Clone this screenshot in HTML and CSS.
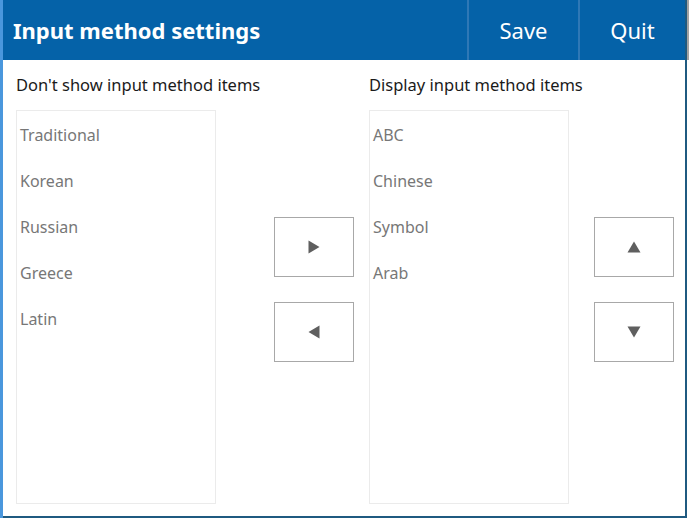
FILE: index.html
```html
<!DOCTYPE html>
<html>
<head>
<meta charset="utf-8">
<link rel="stylesheet" href="styles.css">
</head>
<body>
<div class="frame">
  <div class="edge-left"></div>
  <div class="win">
    <header class="head">
      <h1 class="title">Input method settings</h1>
      <div class="actions">
        <button class="act act-save">Save</button>
        <button class="act act-quit">Quit</button>
      </div>
    </header>
    <main class="content">
      <div class="label label-a">Don't show input method items</div>
      <div class="label label-b">Display input method items</div>
      <ul class="list list-a">
        <li>Traditional</li>
        <li>Korean</li>
        <li>Russian</li>
        <li>Greece</li>
        <li>Latin</li>
      </ul>
      <div class="btns btns-a">
        <button class="arrow"><svg width="12" height="14" viewBox="0 0 12 14"><path d="M0.5 0.5 L11.5 7 L0.5 13.5 Z" fill="#5f5f5f"/></svg></button>
        <button class="arrow"><svg width="12" height="14" viewBox="0 0 12 14"><path d="M11.5 0.5 L0.5 7 L11.5 13.5 Z" fill="#5f5f5f"/></svg></button>
      </div>
      <ul class="list list-b">
        <li>ABC</li>
        <li>Chinese</li>
        <li>Symbol</li>
        <li>Arab</li>
      </ul>
      <div class="btns btns-b">
        <button class="arrow"><svg width="14" height="12" viewBox="0 0 14 12"><path d="M0.5 11.5 L7 0.5 L13.5 11.5 Z" fill="#5f5f5f"/></svg></button>
        <button class="arrow"><svg width="14" height="12" viewBox="0 0 14 12"><path d="M0.5 0.5 L7 11.5 L13.5 0.5 Z" fill="#5f5f5f"/></svg></button>
      </div>
    </main>
  </div>
  <div class="edge-right"><div class="edge-right-top"></div></div>
</div>
</body>
</html>
```
FILE: styles.css
```css
* { box-sizing: border-box; }
html, body { margin: 0; padding: 0; background: #ffffff; }
body { font-family: "Noto Sans", "Open Sans", sans-serif; }
.frame { width: 689px; height: 518px; display: flex; overflow: hidden; }
.edge-left { width: 3px; background: #4a97dd; flex: none; }
.win {
  width: 684px; flex: none; display: flex; flex-direction: column;
  border-right: 2px solid #1f5a80; border-bottom: 2px solid #1f5a80;
  background: #ffffff;
}
.edge-right { flex: 1; background: #ffffff; }
.edge-right-top { height: 60px; background: #a3a3a3; }
.head {
  height: 60px; flex: none; background: #0562a8;
  display: flex; align-items: center; justify-content: space-between;
}
.title {
  margin: 0 0 0 10px; color: #ffffff; font-size: 22px; font-weight: 700;
}
.actions { display: flex; height: 100%; }
.act {
  height: 100%; border: 0; border-left: 2px solid #2f78b6; background: transparent;
  color: #ffffff; font-family: inherit; font-size: 22px; padding: 0; cursor: pointer;
}
.act-save { width: 111px; }
.act-quit { width: 107px; }
.content {
  flex: 1; display: grid; padding: 0 0 0 13px;
  grid-template-columns: 200px 58px 80px 15px 200px 25px 80px;
  grid-template-rows: 50px 394px;
}
.label {
  color: #1a1a1a; font-size: 16.5px; white-space: nowrap; align-self: end;
  padding-bottom: 15px; line-height: 20px;
}
.label-a { grid-column: 1 / 4; grid-row: 1; }
.label-b { grid-column: 5 / 8; grid-row: 1; }
.list {
  list-style: none; margin: 0; padding: 1px 0 0 0;
  border: 1px solid #ebebeb; grid-row: 2;
}
.list-a { grid-column: 1; }
.list-b { grid-column: 5; }
.list li {
  height: 46px; line-height: 46px; padding-left: 3px;
  color: #777777; font-size: 16px;
}
.btns {
  grid-row: 2; display: flex; flex-direction: column; gap: 25px;
  padding-top: 107px;
}
.btns-a { grid-column: 3; }
.btns-b { grid-column: 7; }
.arrow {
  width: 80px; height: 60px; border: 1px solid #a8a8a8; background: #ffffff;
  display: flex; align-items: center; justify-content: center; padding: 0;
}
```
